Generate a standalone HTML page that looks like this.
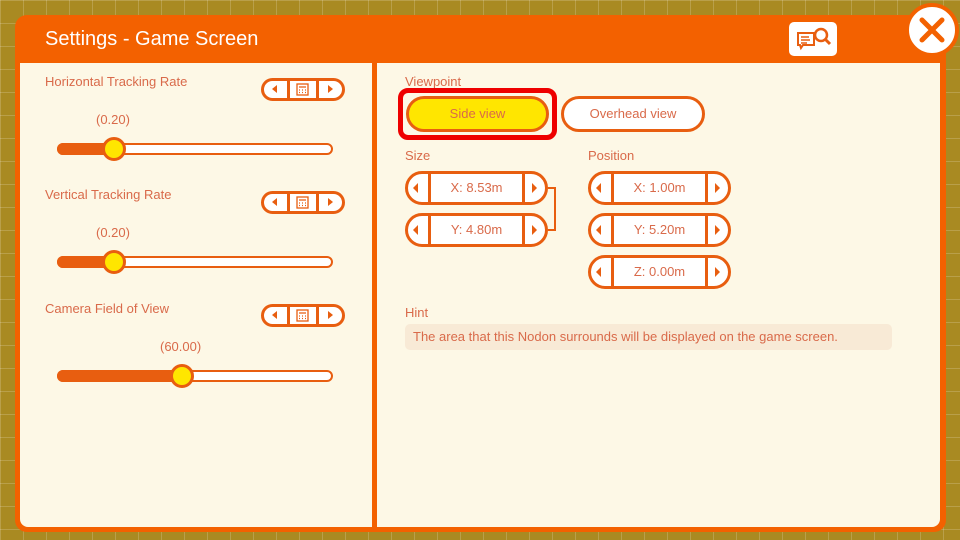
<!DOCTYPE html>
<html><head><style>
*{margin:0;padding:0;box-sizing:border-box}
body{width:960px;height:540px;overflow:hidden;position:relative;font-family:"Liberation Sans",sans-serif;
background-color:#a98a22;
background-image:linear-gradient(rgba(255,255,255,.18) 1px,transparent 1px),linear-gradient(90deg,rgba(255,255,255,.18) 1px,transparent 1px);
background-size:23px 23px}
.a{position:absolute}
.panel{left:15px;top:15px;width:931px;height:517px;background:#f36100;border-radius:12px}
.cream{background:#fdf8e6}
.lbl{color:#d96a4a;font-size:13px}
.step{position:absolute;width:84px;height:23px;border:3px solid #e85e10;border-radius:12px;background:#fff}
.step i{position:absolute;top:0;bottom:0;width:3px;background:#e85e10}
.tri{position:absolute;top:4px;width:0;height:0;border-top:4px solid transparent;border-bottom:4px solid transparent}
.track{position:absolute;height:12px;border:2.5px solid #e85e10;border-radius:6px;background:#fff}
.fill{position:absolute;height:12px;background:#e85e10;border-radius:6px}
.knob{position:absolute;width:24px;height:24px;border-radius:50%;background:#ffe600;border:3px solid #e85e10}
.val{color:#d96a4a;font-size:13px;position:absolute}
.box{position:absolute;width:143px;height:34px;border:3px solid #e85e10;border-radius:17px;background:#fff;font-size:13px;color:#d96a4a;text-align:center;line-height:28px}
.box i{position:absolute;top:0;bottom:0;width:3px;background:#e85e10}
.box b{position:absolute;top:9px;width:0;height:0;border-top:5px solid transparent;border-bottom:5px solid transparent}
</style></head><body>
<div class="a panel"></div>
<div class="a" style="left:45px;top:28px;color:#fff;font-size:20px">Settings - Game Screen</div>
<div class="a cream" style="left:20px;top:63px;width:352px;height:464px;border-radius:0 0 0 8px"></div>
<div class="a cream" style="left:377px;top:63px;width:563px;height:464px;border-radius:0 0 8px 0"></div>
<!-- help icon -->
<div class="a" style="left:789px;top:22px;width:48px;height:34px;background:#fff;border-radius:5px">
<svg width="48" height="34" viewBox="0 0 48 34"><path d="M9 11h16v12H14l-2 3-1-3H9z" fill="none" stroke="#e85e10" stroke-width="2"/><path d="M12 15h8M12 18h9M12 21h6" stroke="#e85e10" stroke-width="1.5"/><circle cx="32" cy="13" r="6" fill="#fff" stroke="#e85e10" stroke-width="2.5"/><path d="M36 17l5 5" stroke="#e85e10" stroke-width="3"/></svg></div>
<!-- close -->
<div class="a" style="left:905px;top:3px;width:54px;height:54px;border-radius:50%;background:#fff;border:4px solid #f36100">
<svg width="46" height="46" viewBox="0 0 46 46"><path d="M13 13l20 20M33 13L13 33" stroke="#f36100" stroke-width="5" stroke-linecap="round"/></svg></div>

<!-- left sliders -->
<div class="a lbl" style="left:45px;top:74px">Horizontal Tracking Rate</div>
<div class="a lbl" style="left:45px;top:187px">Vertical Tracking Rate</div>
<div class="a lbl" style="left:45px;top:301px">Camera Field of View</div>

<div class="step" style="left:261px;top:78px"><i style="left:23px"></i><i style="left:52px"></i><span class="tri" style="left:8px;border-right:5px solid #e85e10"></span><span class="tri" style="left:64px;border-left:5px solid #e85e10"></span><svg class="a" style="left:32px;top:2px" width="13" height="13"><rect x="1" y="1" width="11" height="11" fill="none" stroke="#e85e10" stroke-width="1.3"/><path d="M3 4h7M3 7h1M6 7h1M9 7h1M3 9.5h1M6 9.5h1M9 9.5h1" stroke="#e85e10" stroke-width="1.3"/></svg></div>
<div class="step" style="left:261px;top:191px"><i style="left:23px"></i><i style="left:52px"></i><span class="tri" style="left:8px;border-right:5px solid #e85e10"></span><span class="tri" style="left:64px;border-left:5px solid #e85e10"></span><svg class="a" style="left:32px;top:2px" width="13" height="13"><rect x="1" y="1" width="11" height="11" fill="none" stroke="#e85e10" stroke-width="1.3"/><path d="M3 4h7M3 7h1M6 7h1M9 7h1M3 9.5h1M6 9.5h1M9 9.5h1" stroke="#e85e10" stroke-width="1.3"/></svg></div>
<div class="step" style="left:261px;top:304px"><i style="left:23px"></i><i style="left:52px"></i><span class="tri" style="left:8px;border-right:5px solid #e85e10"></span><span class="tri" style="left:64px;border-left:5px solid #e85e10"></span><svg class="a" style="left:32px;top:2px" width="13" height="13"><rect x="1" y="1" width="11" height="11" fill="none" stroke="#e85e10" stroke-width="1.3"/><path d="M3 4h7M3 7h1M6 7h1M9 7h1M3 9.5h1M6 9.5h1M9 9.5h1" stroke="#e85e10" stroke-width="1.3"/></svg></div>

<div class="val" style="left:96px;top:112px">(0.20)</div>
<div class="track" style="left:57px;top:143px;width:276px"></div><div class="fill" style="left:57px;top:143px;width:58px"></div><div class="knob" style="left:102px;top:137px"></div>
<div class="val" style="left:96px;top:225px">(0.20)</div>
<div class="track" style="left:57px;top:256px;width:276px"></div><div class="fill" style="left:57px;top:256px;width:58px"></div><div class="knob" style="left:102px;top:250px"></div>
<div class="val" style="left:160px;top:339px">(60.00)</div>
<div class="track" style="left:57px;top:370px;width:276px"></div><div class="fill" style="left:57px;top:370px;width:126px"></div><div class="knob" style="left:170px;top:364px"></div>

<!-- right -->
<div class="a lbl" style="left:405px;top:74px">Viewpoint</div>
<div class="a" style="left:398px;top:88px;width:159px;height:52px;border:5px solid #ee0000;border-radius:10px"></div>
<div class="a" style="left:406px;top:96px;width:143px;height:36px;background:#ffe600;border:3px solid #e85e10;border-radius:18px;color:#d96a4a;font-size:13px;text-align:center;line-height:30px">Side view</div>
<div class="a" style="left:561px;top:96px;width:144px;height:36px;background:#fff;border:3px solid #e85e10;border-radius:18px;color:#d96a4a;font-size:13px;text-align:center;line-height:30px">Overhead view</div>

<div class="a lbl" style="left:405px;top:148px">Size</div>
<div class="a lbl" style="left:588px;top:148px">Position</div>

<div class="box" style="left:405px;top:171px"><i style="left:20px"></i><i style="left:114px"></i><b style="left:5px;border-right:5px solid #e85e10"></b><b style="left:124px;border-left:5px solid #e85e10"></b>X: 8.53m</div>
<div class="box" style="left:405px;top:213px"><i style="left:20px"></i><i style="left:114px"></i><b style="left:5px;border-right:5px solid #e85e10"></b><b style="left:124px;border-left:5px solid #e85e10"></b>Y: 4.80m</div>
<div class="a" style="left:548px;top:187px;width:8px;height:44px;border:2px solid #e85e10;border-left:none"></div>
<div class="box" style="left:588px;top:171px"><i style="left:20px"></i><i style="left:114px"></i><b style="left:5px;border-right:5px solid #e85e10"></b><b style="left:124px;border-left:5px solid #e85e10"></b>X: 1.00m</div>
<div class="box" style="left:588px;top:213px"><i style="left:20px"></i><i style="left:114px"></i><b style="left:5px;border-right:5px solid #e85e10"></b><b style="left:124px;border-left:5px solid #e85e10"></b>Y: 5.20m</div>
<div class="box" style="left:588px;top:255px"><i style="left:20px"></i><i style="left:114px"></i><b style="left:5px;border-right:5px solid #e85e10"></b><b style="left:124px;border-left:5px solid #e85e10"></b>Z: 0.00m</div>

<div class="a lbl" style="left:405px;top:305px">Hint</div>
<div class="a" style="left:405px;top:324px;width:487px;height:26px;background:#f8ead6;border-radius:5px;color:#d96a4a;font-size:13px;line-height:26px;padding-left:8px">The area that this Nodon surrounds will be displayed on the game screen.</div>
</body></html>
